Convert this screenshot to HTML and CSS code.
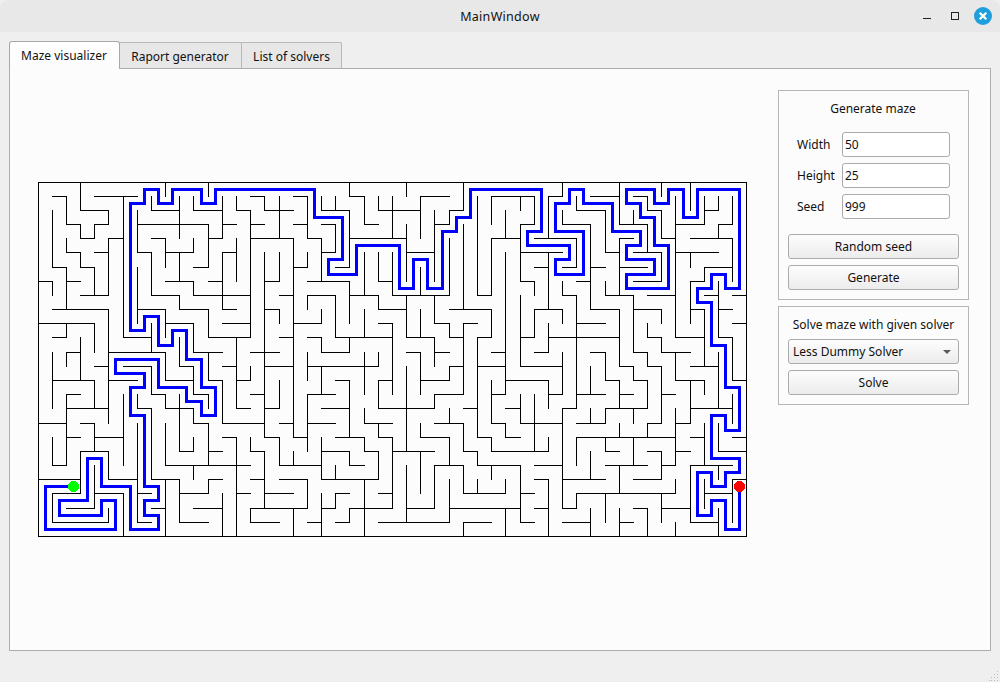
FILE: index.html
```html
<!DOCTYPE html>
<html lang="en">
<head>
<meta charset="utf-8">
<title>MainWindow</title>
<link rel="stylesheet" href="styles.css">
</head>
<body>
<div class="window">
  <header class="titlebar">
    <span class="title">MainWindow</span>
    <svg class="controls" width="80" height="32" viewBox="0 0 80 32">
      <rect x="3" y="18" width="8" height="1" fill="#222"/>
      <rect x="31.5" y="12.500" width="7" height="7" fill="none" stroke="#222"/>
      <circle cx="63" cy="16" r="9" fill="#1f9ede"/>
      <path d="M59.700 12.700 66.300 19.300M66.300 12.700 59.700 19.300" stroke="#fff" stroke-width="2.200" fill="none"/>
    </svg>
  </header>
  <nav class="tabs">
    <div class="tab active">Maze visualizer</div>
    <div class="tab">Raport generator</div>
    <div class="tab">List of solvers</div>
  </nav>
  <main class="pane">
    <svg class="maze" id="maze" width="712" height="358" viewBox="0 0 712 358"></svg>
    <aside class="side">
      <section class="group generate">
        <h2 class="heading">Generate maze</h2>
        <div class="form">
          <label>Width</label><div class="field">50</div>
          <label>Height</label><div class="field">25</div>
          <label>Seed</label><div class="field">999</div>
        </div>
        <div class="button">Random seed</div>
        <div class="button">Generate</div>
      </section>
      <section class="group solve">
        <h2 class="heading">Solve maze with given solver</h2>
        <div class="button combo"><span>Less Dummy Solver</span><svg width="8" height="4" viewBox="0 0 8 4"><path d="M0 0H8L4 4Z" fill="#5a5a5a"/></svg></div>
        <div class="button">Solve</div>
      </section>
    </aside>
  </main>
  <footer class="status">
    <svg class="grip" width="10" height="10" viewBox="0 0 10 10"><path d="M8 0h1v1h-1zM5 3h1v1h-1zM8 3h1v1h-1zM2 6h1v1h-1zM5 6h1v1h-1zM8 6h1v1h-1zM0 9h1v1h-1zM2 9h1v1h-1zM5 9h1v1h-1zM8 9h1v1h-1z" fill="#bdbdbd"/></svg>
  </footer>
</div>
<script src="maze.js"></script>
</body>
</html>
```
FILE: styles.css
```css
* { box-sizing: border-box; }
body { margin: 0; background: #efefef; font: 12px/16px "Noto Sans", sans-serif; color: #111; }
.window { display: flex; flex-direction: column; width: 1000px; height: 682px; background: #efefef; overflow: hidden; }
.titlebar { display: grid; grid-template-columns: 80px 1fr 80px; align-items: center; height: 32px; background: #e8e8e8; border-radius: 8px 8px 0 0; flex: none; }
.title { grid-column: 2; padding-top: 2px; text-align: center; font-size: 12.5px; letter-spacing: 0.3px; }
.controls { display: block; }
.tabs { display: flex; align-items: flex-end; height: 37px; padding: 0 9px; flex: none; position: relative; z-index: 1; }
.tab { height: 26px; width: 100px; margin-bottom: 1px; border: 1px solid #b9b9b9; border-left: 0; border-bottom: 0; background: #e7e7e7; text-align: center; line-height: 28px; border-radius: 0 2px 0 0; }
.tab:nth-child(2) { width: 122px; padding-right: 1px; border-radius: 0; }
.tab.active { width: 111px; height: 28px; margin-bottom: 0; padding-right: 1px; border: 1px solid #a8a8a8; border-bottom: 0; border-radius: 3px 3px 0 0; background: linear-gradient(#fff, #fcfcfc); line-height: 28px; }
.pane { display: flex; justify-content: space-between; align-items: flex-start; height: 583px; margin: -1px 9px 0; padding: 21px 21px 0 28px; border: 1px solid #adadad; background: #fcfcfc; flex: none; }
.maze { display: block; margin-top: 92px; flex: none; }
.side { display: flex; flex-direction: column; gap: 6px; width: 191px; }
.group { border: 1px solid #b7b7b7; padding: 9px; display: flex; flex-direction: column; gap: 6px; }
.heading { margin: 0; padding-top: 1px; height: 17px; font-size: 12px; font-weight: 400; line-height: 16px; text-align: center; }
.generate { height: 210px; }
.generate .heading { padding-right: 1px; }
.solve { height: 99px; }
.form { display: grid; grid-template-columns: 39px 108px; column-gap: 6px; row-gap: 6px; align-items: center; padding: 9px; }
.form label { line-height: 17px; }
.field { height: 25px; border: 1px solid #ababab; border-radius: 3px; background: #fff; padding: 0 2px; line-height: 23px; }
.button { height: 25px; border: 1px solid #ababab; border-radius: 3px; background: linear-gradient(#fdfdfd, #ececec); text-align: center; line-height: 23px; }
.combo { display: flex; align-items: center; justify-content: space-between; padding: 0 7px 0 4px; }
.status { flex: 1; display: flex; justify-content: flex-end; align-items: flex-end; padding: 0 1px 1px 0; }
```
FILE: maze.js
```js
const STEP = 14.177;
// Index = grid line y; each entry is a list of x spans.
const ROWS = [
  "0-50",
  "1-2 4-7 15-16 18-19 22-23 27-29 32-35 36-37 39-41 42-43",
  "3-5 8-10 11-13 14-15 16-18 20-22 24-27 29-30 38-40 43-44 47-48",
  "2-3 4-5 7-12 13-14 15-16 18-19 20-21 23-24 28-29 34-35 37-39 41-43 45-47 48-49",
  "3-4 5-6 8-9 12-13 15-18 19-20 22-26 32-34 35-38 41-42 44-45 46-49",
  "2-3 4-5 7-8 9-11 13-14 20-21 26-28 34-37 40-41 42-44 45-48",
  "1-2 3-4 11-12 18-19 21-22 35-36 37-38 39-40 41-43 47-49",
  "0-1 2-3 9-11 12-13 16-17 19-22 24-25 34-35 38-39 42-44 46-47",
  "3-5 8-10 11-15 17-18 19-21 22-24 25-29 31-32 37-38 40-42 43-45 47-48 49-50",
  "1-5 7-9 10-12 13-14 16-17 24-26 29-32 35-37 39-41 42-44 46-47 48-49",
  "0-4 9-11 13-15 18-20 24-25 28-29 30-31 38-40 49-50",
  "1-2 6-8 12-15 17-18 19-20 21-25 26-28 29-30 31-32 34-35 36-41 43-44 45-47 48-49",
  "2-3 5-9 11-13 15-17 20-22 26-27 28-29 32-33 35-36 39-40 42-43 44-46",
  "4-5 6-8 10-11 13-14 16-18 19-24 29-30 31-33 34-37 41-42 43-44 46-48",
  "1-4 5-7 9-11 12-13 14-15 21-22 24-25 27-29 33-36 40-41 42-43 45-47 49-50",
  "2-3 8-9 11-12 15-16 19-21 28-30 32-33 36-37 38-40 41-42 44-45",
  "2-5 7-8 9-11 14-15 16-17 20-22 24-28 30-31 33-34 37-38 40-43 46-49",
  "0-2 3-4 11-12 13-16 17-18 19-21 23-25 28-30 32-33 34-37 38-40 43-44 45-46",
  "2-3 4-6 13-14 16-17 18-19 21-23 24-25 27-29 31-32 33-34 38-45 46-47 49-50",
  "3-5 10-11 12-13 15-16 20-22 23-24 25-28 30-31 32-36 40-41 43-44 45-46 48-50",
  "1-2 9-15 17-20 22-23 28-30 31-34 35-37 40-43 44-45 46-49",
  "0-3 5-7 8-10 12-13 15-16 17-19 20-24 35-36 37-40 42-44 49-50",
  "1-3 4-6 7-8 10-12 14-15 16-18 21-22 24-25 30-33 34-35 38-45 47-49",
  "2-4 8-9 11-13 15-19 20-21 22-25 26-28 29-34 35-36 37-38 42-43 44-46",
  "1-5 7-8 10-12 15-17 19-20 21-22 24-29 30-32 34-35 37-39 41-42 46-48",
  "0-50"
];
// Index = grid line x; each entry is a list of y spans.
const COLS = [
  "0-25",
  "2-6 7-8 12-16 18-20 22-24",
  "1-3 4-5 6-9 10-11 12-13 15-20",
  "0-2 3-4 5-6 11-14 19-22",
  "3-4 6-8 10-12 14-16 17-19 20-23",
  "2-3 4-8 9-17 19-21 23-24",
  "1-11 15-20 22-25",
  "2-5 6-10 15-16 17-24",
  "1-2 5-8 10-12 13-15 16-21",
  "0-1 4-6 9-11 12-14 15-16 17-20 21-25",
  "1-4 5-7 8-9 11-13 15-19 21-24",
  "1-2 4-5 7-8 10-12 13-15 16-17 18-19 20-21",
  "0-1 3-6 9-11 12-14 15-16 17-20 21-22",
  "1-4 5-9 14-17 22-25",
  "1-2 4-7 11-16 18-25",
  "2-11 13-14 18-19 23-24",
  "1-2 5-18 19-23",
  "1-4 5-7 9-10 14-16 18-20",
  "4-18 19-20 23-25",
  "1-4 5-6 8-9 12-14 15-19 21-23",
  "1-2 4-7 9-10 11-12 13-15 18-21 22-25",
  "1-2 3-5 8-11 20-21 22-23",
  "0-1 2-6 7-10 11-12 14-18 19-20 23-24",
  "1-3 5-8 9-11 12-15 16-17 18-19 21-25",
  "1-2 5-7 8-9 12-13 14-16 17-18 19-21",
  "1-4 5-8 10-15 18-23",
  "0-1 3-7 8-11 13-19 20-24",
  "1-4 6-8 9-11 12-15 17-18 19-22",
  "2-7 8-10 11-13 15-16 20-23",
  "2-3 4-8 10-11 13-14 16-17 18-20 21-24",
  "0-2 3-9 10-15 17-19 20-22 24-25",
  "1-8 11-18 19-20 21-22",
  "1-3 4-8 9-11 14-17 18-19 20-21",
  "2-4 5-15 17-18 21-22 23-25",
  "1-2 3-7 8-13 15-17 20-24",
  "1-3 7-8 9-11 15-19",
  "1-4 5-9 10-12 14-16 18-19 21-25",
  "0-1 2-3 7-8 9-10 12-15 16-23",
  "1-2 4-6 8-16 18-20 22-23",
  "3-9 13-15 16-17 19-21 23-25",
  "2-5 7-8 12-14 16-17 18-19 22-24",
  "0-3 4-8 9-13 14-16 17-18 20-22 23-25",
  "2-3 8-12 13-14 16-17 18-20",
  "1-2 3-5 10-11 12-13 14-16 17-18 23-25",
  "0-1 2-4 5-7 9-10 11-12 13-17 19-21 22-24",
  "1-11 12-14 16-20 21-22 24-25",
  "0-2 5-6 7-10 14-17 20-24",
  "1-3 6-7 9-13 14-15 17-20 21-23",
  "1-2 3-4 7-11 12-16 17-19 20-21 23-25",
  "1-3 4-7 11-14 15-17 21-24",
  "0-25"
];
// Solution: start cell, then alternating target column / target row.
const START = [2, 21];
const MOVES = [0,24,5,22,4,23,1,22,3,19,4,21,6,24,8,23,7,22,8,21,7,16,6,14,7,13,5,12,8,14,10,15,11,16,12,14,11,12,10,10,9,11,8,9,7,10,6,1,7,0,8,1,9,0,11,1,12,0,19,2,21,5,20,6,22,4,25,7,26,5,27,7,28,3,29,2,30,0,35,3,34,4,37,5,36,6,38,3,36,1,37,0,38,1,40,3,42,4,41,5,43,6,41,7,44,4,43,2,42,1,41,0,43,1,44,0,45,2,46,0,49,7,48,6,47,7,46,8,47,11,48,14,49,17,48,16,47,19,49,20,48,21,47,20,46,23,47,22,48,24,49,21];

const at = i => Math.floor(i * STEP) + 0.5;
const spans = s => s.split(" ").map(p => p.split("-").map(Number));
let walls = "";
ROWS.forEach((s, y) => spans(s).forEach(([a, b]) => { walls += `M${at(a)} ${at(y)}H${at(b)}`; }));
COLS.forEach((s, x) => spans(s).forEach(([a, b]) => { walls += `M${at(x)} ${at(a)}V${at(b)}`; }));
let route = `M${at(START[0] + 0.5)} ${at(START[1] + 0.5)}`;
MOVES.forEach((m, i) => { route += (i % 2 ? "V" : "H") + at(m + 0.5); });
document.getElementById("maze").innerHTML =
  `<g shape-rendering="crispEdges" fill="none"><path d="${walls}" stroke="#000" stroke-linecap="square"/>` +
  `<path d="${route}" stroke="#00f" stroke-width="3"/>` +
  `<circle cx="35.500" cy="304.500" r="5.600" fill="#0f0"/><circle cx="701.500" cy="304.500" r="5.600" fill="#f00"/></g>`;
```
